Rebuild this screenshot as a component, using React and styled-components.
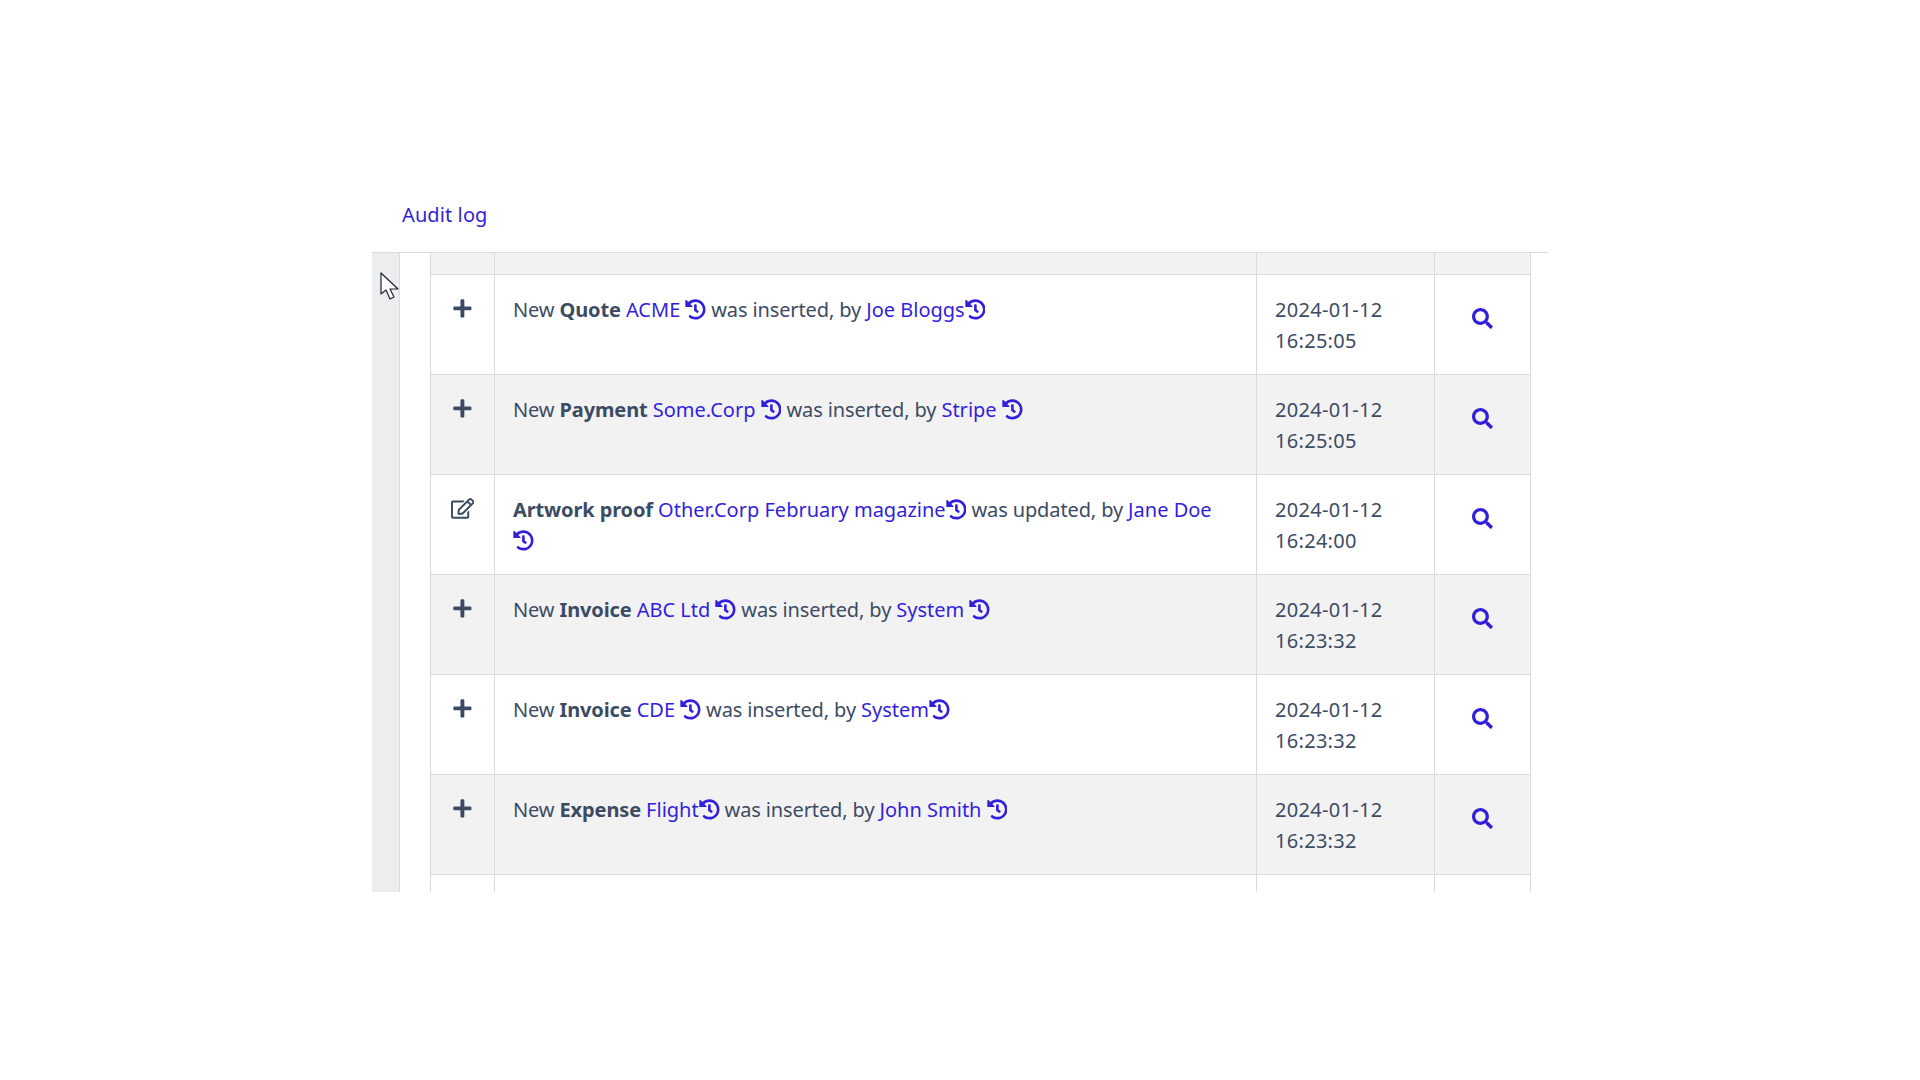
import React from "react";
import styled, { createGlobalStyle } from "styled-components";
import { FaPlus, FaRegEdit, FaHistory, FaSearch } from "react-icons/fa";

const rows = [
  { icon: "add", parts: ["New ", <b key="b">Quote</b>, " ", <Link key="a">ACME</Link>, " ", <H key="h1" />, " was inserted, by ", <Link key="c">Joe Bloggs</Link>, <H key="h2" />], date: "2024-01-12", time: "16:25:05" },
  { icon: "add", parts: ["New ", <b key="b">Payment</b>, " ", <Link key="a">Some.Corp</Link>, " ", <H key="h1" />, " was inserted, by ", <Link key="c">Stripe</Link>, " ", <H key="h2" />], date: "2024-01-12", time: "16:25:05" },
  { icon: "edit", parts: [<b key="b">Artwork proof</b>, " ", <Link key="a">Other.Corp February magazine</Link>, <H key="h1" />, " was updated, by ", <Link key="c">Jane Doe</Link>, " ", <H key="h2" />], date: "2024-01-12", time: "16:24:00" },
  { icon: "add", parts: ["New ", <b key="b">Invoice</b>, " ", <Link key="a">ABC Ltd</Link>, " ", <H key="h1" />, " was inserted, by ", <Link key="c">System</Link>, " ", <H key="h2" />], date: "2024-01-12", time: "16:23:32" },
  { icon: "add", parts: ["New ", <b key="b">Invoice</b>, " ", <Link key="a">CDE</Link>, " ", <H key="h1" />, " was inserted, by ", <Link key="c">System</Link>, <H key="h2" />], date: "2024-01-12", time: "16:23:32" },
  { icon: "add", parts: ["New ", <b key="b">Expense</b>, " ", <Link key="a">Flight</Link>, <H key="h1" />, " was inserted, by ", <Link key="c">John Smith</Link>, " ", <H key="h2" />], date: "2024-01-12", time: "16:23:32" },
];

function Link({ children }) {
  return <StLink href="#">{children}</StLink>;
}

function H() {
  return (
    <StLink href="#">
      <FaHistory />
    </StLink>
  );
}

const App = () => {
  return (
    <StPage>
      <GlobalStyle />
      <StTabs>
        <StTab href="#">Audit log</StTab>
      </StTabs>
      <StPanel>
        <StSidebar>
          <StCursor width="20" height="30" viewBox="0 0 20 30">
            <path d="M1 1 L1 22 L6 18 L10 27 L14 25 L10 17 L18 17 Z" fill="#fff" stroke="#1c2430" strokeWidth="1.2" strokeLinejoin="round" />
          </StCursor>
        </StSidebar>
        <StScroll>
          <StTable>
            <colgroup>
              <col width="64" />
              <col width="762" />
              <col width="178" />
              <col width="96" />
            </colgroup>
            <tbody>
              <StHeadRow>
                <td />
                <td />
                <td />
                <td />
              </StHeadRow>
              {rows.map((row, i) => (
                <StRow key={i} $striped={i % 2 === 1}>
                  <StIconCell>{row.icon === "add" ? <FaPlus /> : <StEditIcon />}</StIconCell>
                  <StTextCell>{row.parts}</StTextCell>
                  <StDateCell>
                    {row.date}
                    <br />
                    {row.time}
                  </StDateCell>
                  <StViewCell>
                    <StLink href="#">
                      <FaSearch />
                    </StLink>
                  </StViewCell>
                </StRow>
              ))}
              <StRow>
                <td />
                <td />
                <td />
                <td />
              </StRow>
            </tbody>
          </StTable>
        </StScroll>
      </StPanel>
    </StPage>
  );
};

export default App;

const GlobalStyle = createGlobalStyle`
  body {
    margin: 0;
    background: #fff;
    color: #3c4b64;
    font-family: "Noto Sans", "Open Sans", sans-serif;
    font-size: 20px;
    line-height: 31.2px;
  }
  b {
    font-weight: 700;
  }
  svg {
    font-size: 20.8px;
  }
`;

const StPage = styled.div`
  width: 1176px;
  height: 1080px;
  margin: 0 auto;
  padding-top: 200px;
  box-sizing: border-box;
`;

const StTabs = styled.div`
  height: 52px;
  box-sizing: border-box;
  padding-left: 30px;
  line-height: 30px;
`;

const StTab = styled.a`
  color: #321fdb;
  text-decoration: none;
  letter-spacing: 0.1px;
`;

const StPanel = styled.div`
  display: flex;
  height: 640px;
  border-top: 1px solid #d8dbe0;
  box-sizing: border-box;
`;

const StSidebar = styled.div`
  position: relative;
  flex: 0 0 28px;
  box-sizing: border-box;
  background: #ebedef;
  border-right: 1px solid #d8dbe0;
`;

const StCursor = styled.svg`
  position: absolute;
  top: 19px;
  left: 8px;
`;

const StScroll = styled.div`
  padding-left: 30px;
  overflow: hidden;
`;

const StTable = styled.table`
  width: 1101px;
  table-layout: fixed;
  border-collapse: collapse;
  border-left: 1px solid #d8dbe0;

  td {
    border-right: 1px solid #d8dbe0;
    border-bottom: 1px solid #d8dbe0;
  }
`;

const StHeadRow = styled.tr`
  height: 21px;
  background: #f2f2f3;
`;

const StRow = styled.tr`
  height: 100px;
  background: ${(props) => (props.$striped ? "#f2f2f3" : "#fff")};
`;

const StIconCell = styled.td`
  padding: 21px 0 0;
  vertical-align: top;
  text-align: center;
`;

const StEditIcon = styled(FaRegEdit)`
  width: 23.4px;
  height: 20.8px;
`;

const StTextCell = styled.td`
  padding: 19px 30px 17px 18px;
  vertical-align: top;
  letter-spacing: -0.12px;
`;

const StDateCell = styled.td`
  padding: 19px 18px 17px;
  vertical-align: top;
  letter-spacing: 0.3px;
`;

const StViewCell = styled.td`
  text-align: center;
  vertical-align: middle;
  padding: 0 0 11px;
`;

const StLink = styled.a`
  color: #321fdb;
  text-decoration: none;
  letter-spacing: 0;

  svg {
    vertical-align: -3px;
  }
`;
